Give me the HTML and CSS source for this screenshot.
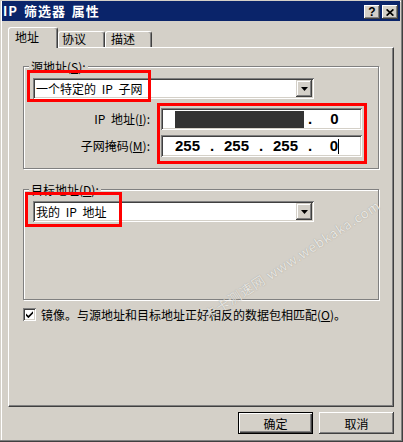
FILE: index.html
```html
<!DOCTYPE html>
<html lang="zh-CN">
<head>
<meta charset="utf-8">
<title>IP 筛选器 属性</title>
<link rel="stylesheet" href="styles.css">
</head>
<body>
<div class="window">
  <div class="titlebar">
    <span class="title">IP 筛选器 属性</span>
    <div class="tbtns">
      <span class="tbtn help">?</span>
      <span class="tbtn close"><svg width="8" height="7" viewBox="0 0 8 7"><path d="M0.6 0.4 L7.4 6.6 M7.4 0.4 L0.6 6.6" stroke="#000" stroke-width="1.7" fill="none"/></svg></span>
    </div>
  </div>
  <div class="tabs">
    <div class="tab active t1">地址</div>
    <div class="tab t2">协议</div>
    <div class="tab t3">描述</div>
  </div>
  <div class="panel">
    <fieldset class="group">
      <legend>源地址(<u>S</u>):</legend>
      <div class="gbody b1">
        <div class="combo">
          <span class="combo-text">一个特定的 IP 子网</span>
          <span class="drop"><svg width="7" height="4" viewBox="0 0 7 4"><polygon points="0,0 7,0 3.5,4" fill="#000"/></svg></span>
        </div>
        <div class="rows">
          <label class="lbl">IP 地址(<u>I</u>):</label>
          <div class="ipfield">
            <span class="redact"></span><span class="dot">.</span><span class="oct">0</span>
          </div>
          <label class="lbl">子网掩码(<u>M</u>):</label>
          <div class="ipfield">
            <span class="oct">255</span><span class="dot">.</span><span class="oct">255</span><span class="dot">.</span><span class="oct">255</span><span class="dot">.</span><span class="oct">0<span class="caret"></span></span>
          </div>
        </div>
      </div>
    </fieldset>
    <fieldset class="group g2">
      <legend>目标地址(<u>D</u>):</legend>
      <div class="gbody b2">
        <div class="combo">
          <span class="combo-text">我的 IP 地址</span>
          <span class="drop"><svg width="7" height="4" viewBox="0 0 7 4"><polygon points="0,0 7,0 3.5,4" fill="#000"/></svg></span>
        </div>
      </div>
    </fieldset>
    <div class="check">
      <span class="cbox"><svg width="7" height="7" viewBox="0 0 7 7"><polygon points="0,2.4 2.4,4.8 7,0.2 7,2.6 2.4,7.2 0,4.8" fill="#000"/></svg></span>
      <span class="clabel">镜像。与源地址和目标地址正好相反的数据包相匹配(<u>O</u>)。</span>
    </div>
  </div>
  <div class="buttons">
    <button class="btn default">确定</button>
    <button class="btn">取消</button>
  </div>
  <div class="watermark">卡卡测速网 www.webkaka.com</div>
  <div class="redbox r1"></div>
  <div class="redbox r2"></div>
  <div class="redbox r3"></div>
</div>
</body>
</html>
```

FILE: styles.css
```css
* { box-sizing: border-box; }
html, body { margin: 0; padding: 0; }
body {
  background: #d4d0c8;
  font-family: "Noto Sans CJK SC", "Noto Sans", sans-serif;
  font-size: 12px;
  color: #000;
}
.window {
  position: relative;
  width: 403px;
  height: 442px;
  background: #d4d0c8;
  padding: 1px 3px 2px 2px;
  overflow: hidden;
  word-spacing: 3px;
  box-shadow: inset -1px -1px 0 #404040, inset -2px -2px 0 #808080,
              inset 1px 1px 0 #d4d0c8, inset 2px 2px 0 #ffffff;
}
.titlebar {
  height: 20px;
  background: #0a246a;
  display: flex;
  justify-content: space-between;
  align-items: flex-start;
  padding: 0 2px 0 1px;
}
.title {
  color: #fff;
  font-weight: bold;
  font-size: 13px;
  line-height: 20px;
  letter-spacing: 1px;
  word-spacing: 2px;
}
.tbtns { display: flex; gap: 2px; margin-top: 4px; }
.tbtn {
  width: 16px;
  height: 14px;
  background: #d4d0c8;
  display: flex;
  align-items: center;
  justify-content: center;
  font: bold 12px "Liberation Sans", Arial, sans-serif;
  line-height: 14px;
  box-shadow: inset -1px -1px 0 #404040, inset 1px 1px 0 #ffffff,
              inset -2px -2px 0 #808080, inset 2px 2px 0 #d4d0c8;
}

.tabs {
  position: relative;
  z-index: 1;
  display: flex;
  align-items: flex-end;
  height: 20px;
  margin: 6px 0 0 6px;
}
.tab {
  border: 1px solid;
  border-color: #ffffff #404040 transparent #ffffff;
  border-bottom: 0;
  border-radius: 3px 3px 0 0;
  box-shadow: inset -1px 0 0 #808080;
  line-height: 14px;
  background: #d4d0c8;
}
.t1 { width: 50px; height: 21px; margin-bottom: -1px; padding: 2px 0 0 6px; }
.t2 { width: 47px; height: 16px; padding: 0 0 0 3px; }
.t3 { width: 47px; height: 16px; padding: 0 0 0 5px; }

.panel {
  width: 386px;
  height: 360px;
  margin-left: 6px;
  border: 1px solid;
  border-color: #ffffff #404040 #404040 #ffffff;
  box-shadow: inset -1px -1px 0 #808080;
  padding: 11px 0 0 14px;
}
.group {
  margin: 0;
  padding: 0;
  min-width: 0;
  width: 356px;
  border: 1px solid #808080;
  box-shadow: 1px 1px 0 #ffffff, inset 1px 1px 0 #ffffff;
}
.group legend {
  margin-left: 5px;
  padding: 0 2px;
  line-height: 15px;
  background: #d4d0c8;
}
.g2 { margin-top: 13px; }
.gbody { padding: 4px 0 0 9px; }
.b1 { height: 94px; }
.b2 { height: 102px; }

.combo {
  width: 281px;
  height: 21px;
  background: #fff;
  display: flex;
  align-items: center;
  padding: 2px;
  box-shadow: inset 1px 1px 0 #808080, inset -1px -1px 0 #ffffff,
              inset 2px 2px 0 #404040, inset -2px -2px 0 #d4d0c8;
}
.combo-text { padding-left: 1px; line-height: 17px; }
.drop {
  margin-left: auto;
  width: 16px;
  height: 17px;
  background: #d4d0c8;
  display: flex;
  align-items: center;
  justify-content: center;
  box-shadow: inset -1px -1px 0 #404040, inset 1px 1px 0 #d4d0c8,
              inset -2px -2px 0 #808080, inset 2px 2px 0 #ffffff;
}

.rows {
  display: grid;
  grid-template-columns: 117px 201px;
  column-gap: 11px;
  row-gap: 5px;
  margin-top: 9px;
}
.lbl { text-align: right; line-height: 22px; }
.ipfield {
  height: 22px;
  background: #fff;
  display: flex;
  align-items: center;
  padding-left: 8px;
  box-shadow: inset 1px 1px 0 #808080, inset -1px -1px 0 #ffffff,
              inset 2px 2px 0 #404040, inset -2px -2px 0 #d4d0c8;
}
.oct, .dot {
  font: bold 15px "Liberation Sans", Arial, sans-serif;
  line-height: 18px;
  text-align: center;
}
.oct { width: 37px; }
.dot { width: 12px; }
.redact {
  width: 129px;
  height: 17px;
  margin-left: 6px;
  background: #333333;
}
.caret {
  display: inline-block;
  width: 1px;
  height: 15px;
  background: #000;
  vertical-align: -3px;
}

.check {
  display: flex;
  align-items: center;
  gap: 5px;
  margin-top: 7px;
}
.cbox {
  width: 13px;
  height: 13px;
  background: #fff;
  display: flex;
  align-items: center;
  justify-content: center;
  box-shadow: inset 1px 1px 0 #808080, inset -1px -1px 0 #ffffff,
              inset 2px 2px 0 #404040, inset -2px -2px 0 #d4d0c8;
}
.clabel { line-height: 15px; }

.buttons {
  display: flex;
  justify-content: flex-end;
  gap: 6px;
  margin-top: 5px;
  padding-right: 6px;
}
.btn {
  width: 75px;
  height: 22px;
  padding: 0;
  border: 0;
  background: #d4d0c8;
  font-family: "Noto Sans CJK SC", "Noto Sans", sans-serif;
  font-size: 12px;
  color: #000;
  box-shadow: inset -1px -1px 0 #404040, inset 1px 1px 0 #ffffff,
              inset -2px -2px 0 #808080, inset 2px 2px 0 #d4d0c8;
}
.btn.default {
  box-shadow: inset 0 0 0 1px #000000, inset 2px 2px 0 #ffffff,
              inset -2px -2px 0 #404040, inset -3px -3px 0 #808080;
}

.watermark {
  position: absolute;
  left: 176px;
  top: 250px;
  width: 232px;
  text-align: center;
  font-size: 13px;
  letter-spacing: 1px;
  word-spacing: 0;
  color: rgba(238, 236, 232, 0.95);
  text-shadow: 0 0 1px rgba(110, 108, 102, 0.6);
  transform: rotate(-33deg);
  pointer-events: none;
}
.redbox {
  position: absolute;
  border: 3px solid #ff0000;
}
.r1 { left: 27px; top: 70px; width: 124px; height: 32px; }
.r2 { left: 157px; top: 103px; width: 210px; height: 61px; }
.r3 { left: 25px; top: 192px; width: 97px; height: 35px; }
```
